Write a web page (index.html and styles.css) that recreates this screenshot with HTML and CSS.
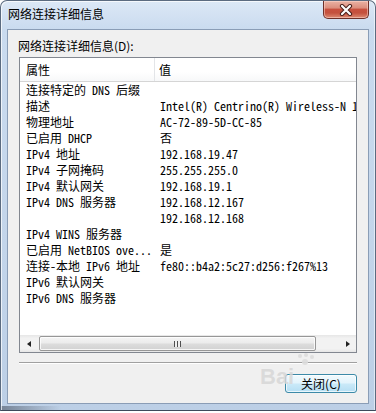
FILE: index.html
```html
<!DOCTYPE html>
<html lang="zh-CN">
<head>
  <meta charset="UTF-8">
  <title>网络连接详细信息</title>
  <link rel="stylesheet" href="styles.css">
</head>
<body>
  <div class="window">
    <div class="titlebar">
      <span class="title">网络连接详细信息</span>
      <button class="close-btn" aria-label="关闭">
        <svg width="14" height="12" viewBox="0 0 14 12">
          <path d="M3 2 L11 10 M11 2 L3 10" stroke="#4a1f1a" stroke-width="4.2" stroke-linecap="round"/>
          <path d="M3 2 L11 10 M11 2 L3 10" stroke="#ffffff" stroke-width="2.2" stroke-linecap="round"/>
        </svg>
      </button>
    </div>

    <div class="client">
      <div class="caption">网络连接详细信息(D):</div>

      <div class="listview">
        <div class="lv-header">
          <div class="lv-col name">属性</div>
          <div class="lv-col value">值</div>
        </div>
        <div class="lv-body">
          <div class="lv-row"><span class="name">连接特定的 DNS 后缀</span><span class="value"></span></div>
          <div class="lv-row"><span class="name">描述</span><span class="value">Intel(R) Centrino(R) Wireless-N 1000</span></div>
          <div class="lv-row"><span class="name">物理地址</span><span class="value">AC-72-89-5D-CC-85</span></div>
          <div class="lv-row"><span class="name">已启用 DHCP</span><span class="value">否</span></div>
          <div class="lv-row"><span class="name">IPv4 地址</span><span class="value">192.168.19.47</span></div>
          <div class="lv-row"><span class="name">IPv4 子网掩码</span><span class="value">255.255.255.0</span></div>
          <div class="lv-row"><span class="name">IPv4 默认网关</span><span class="value">192.168.19.1</span></div>
          <div class="lv-row"><span class="name">IPv4 DNS 服务器</span><span class="value">192.168.12.167</span></div>
          <div class="lv-row"><span class="name"></span><span class="value">192.168.12.168</span></div>
          <div class="lv-row"><span class="name">IPv4 WINS 服务器</span><span class="value"></span></div>
          <div class="lv-row"><span class="name">已启用 NetBIOS ove...</span><span class="value">是</span></div>
          <div class="lv-row"><span class="name">连接-本地 IPv6 地址</span><span class="value">fe80::b4a2:5c27:d256:f267%13</span></div>
          <div class="lv-row"><span class="name">IPv6 默认网关</span><span class="value"></span></div>
          <div class="lv-row"><span class="name">IPv6 DNS 服务器</span><span class="value"></span></div>
        </div>
        <div class="hscroll">
          <div class="sb-arrow left"></div>
          <div class="sb-track">
            <div class="sb-thumb"><span class="grip"></span></div>
          </div>
          <div class="sb-arrow right"></div>
        </div>
      </div>

      <div class="separator"></div>

      <div class="actions">
        <button class="btn">关闭(C)</button>
      </div>

      <!-- baidu watermark -->
      <div class="watermark">
        <span class="paw"></span>
        <span class="wm-text">Bai</span>
      </div>
    </div>
  </div>
</body>
</html>
```

FILE: styles.css
```css
/* Reset */
body, div, span, button {
  margin: 0;
  padding: 0;
}

body {
  width: 376px;
  height: 413px;
  overflow: hidden;
  background-color: #ffffff;
  font-family: "Noto Sans CJK SC", sans-serif;
  font-size: 12px;
  color: #000;
}

/* Window frame */
.window {
  width: 376px;
  height: 411px;
  box-sizing: border-box;
  border: 1px solid #5b6b80;
  border-bottom-color: #3e4a5a;
  border-radius: 7px 7px 0 0;
  background:
    linear-gradient(to right, rgba(60, 70, 85, 0.55) 0px, rgba(60, 70, 85, 0) 60px) bottom / 100% 4px no-repeat,
    linear-gradient(to bottom, #dce8f6 0%, #cadbef 28px, #c3d5ea 60%, #bccfe6 100%);
  padding: 0 6px 6px 6px;
  display: flex;
  flex-direction: column;
  box-shadow: inset 1px 1px 0 rgba(255, 255, 255, 0.7), inset -1px 0 0 rgba(255, 255, 255, 0.5);
}

.titlebar {
  height: 28px;
  display: flex;
  justify-content: space-between;
  align-items: flex-start;
}

.title {
  margin-top: 5px;
  margin-left: 1px;
  line-height: 16px;
  color: #000;
}

.close-btn {
  width: 46px;
  height: 18px;
  box-sizing: border-box;
  border: 1px solid #6e3029;
  border-top: none;
  border-radius: 0 0 5px 5px;
  background: linear-gradient(to bottom, #eab2a4 0%, #dc8f7e 40%, #c8503e 50%, #c4513d 70%, #dd8a72 100%);
  box-shadow: inset 0 0 0 1px rgba(255, 220, 210, 0.5);
  display: flex;
  align-items: center;
  justify-content: center;
  padding: 0;
}

/* Client area */
.client {
  position: relative;
  flex-grow: 1;
  background-color: #f0f0f0;
  border: 1px solid #8a9db6;
  padding: 8px 11px 0 11px;
  display: flex;
  flex-direction: column;
}

.caption {
  line-height: 16px;
  margin-left: -1px;
  margin-bottom: 3px;
}

/* List view */
.listview {
  height: 296px;
  box-sizing: border-box;
  border: 1px solid #828790;
  background-color: #fff;
  display: flex;
  flex-direction: column;
  overflow: hidden;
}

.lv-header {
  height: 23px;
  flex-shrink: 0;
  border-bottom: 1px solid #d5d5d5;
  display: flex;
  background: linear-gradient(to bottom, #ffffff 0%, #ffffff 60%, #f7f8f9 100%);
}

.lv-col {
  line-height: 23px;
  padding-left: 6px;
}

.lv-col.name {
  width: 135px;
  box-sizing: border-box;
  border-right: 1px solid #e3e5e8;
}

.lv-col.value {
  padding-left: 4px;
}

.lv-body {
  flex-grow: 1;
  overflow: hidden;
  font-family: "Noto Sans Mono CJK SC", "Noto Sans CJK SC", monospace;
}

.lv-row {
  height: 16px;
  line-height: 16px;
  display: flex;
  white-space: nowrap;
}

.lv-row .name {
  width: 135px;
  flex-shrink: 0;
  box-sizing: border-box;
  padding-left: 6px;
  overflow: hidden;
}

.lv-row .value {
  padding-left: 5px;
}

/* Horizontal scrollbar */
.hscroll {
  height: 17px;
  flex-shrink: 0;
  display: flex;
  background: linear-gradient(to bottom, #e6e6e6 0%, #f2f2f2 20%, #f2f2f2 80%, #e6e6e6 100%);
}

.sb-arrow {
  width: 17px;
  display: flex;
  align-items: center;
  justify-content: center;
}

.sb-arrow::before {
  content: "";
  width: 0;
  height: 0;
  border-top: 3.5px solid transparent;
  border-bottom: 3.5px solid transparent;
}

.sb-arrow.left::before {
  border-right: 4px solid #222;
}

.sb-arrow.right::before {
  border-left: 4px solid #222;
}

.sb-track {
  flex-grow: 1;
  padding: 1px 0 1px 2px;
  display: flex;
}

.sb-thumb {
  width: 277px;
  box-sizing: border-box;
  border: 1px solid #979797;
  border-radius: 2px;
  background: linear-gradient(to bottom, #f5f5f5 0%, #ececec 45%, #dcdcdc 55%, #d2d2d2 100%);
  box-shadow: inset 0 0 0 1px rgba(255, 255, 255, 0.8);
  display: flex;
  align-items: center;
  justify-content: center;
}

.grip {
  width: 7px;
  height: 6px;
  background: repeating-linear-gradient(to right, #505050 0, #505050 1px, #f0f0f0 1px, #f0f0f0 3px);
}

/* Separator and buttons */
.separator {
  margin-top: 9px;
  height: 1px;
  background-color: #a0a0a0;
  border-bottom: 1px solid #ffffff;
}

.actions {
  margin-top: 10px;
  display: flex;
  justify-content: flex-end;
}

.btn {
  width: 72px;
  height: 19px;
  box-sizing: border-box;
  border: 1px solid #3c8aa8;
  border-radius: 3px;
  background: linear-gradient(to bottom, #f2fafd 0%, #e3f4fc 45%, #c9e9f8 55%, #b5def3 100%);
  box-shadow: inset 0 0 0 1px rgba(255, 255, 255, 0.7);
  font-family: "Noto Sans CJK SC", sans-serif;
  font-size: 12px;
  line-height: 16px;
  color: #000;
}

/* Watermark */
.watermark {
  position: absolute;
  left: 252px;
  top: 322px;
  width: 60px;
  height: 40px;
  pointer-events: none;
}

.wm-text {
  position: absolute;
  left: 0;
  top: 12px;
  font-family: "Liberation Sans", sans-serif;
  font-weight: bold;
  font-size: 22px;
  color: rgba(215, 215, 215, 0.85);
}

.paw {
  position: absolute;
  left: 38px;
  top: 2px;
  width: 4px;
  height: 4px;
  border-radius: 50%;
  background-color: rgba(220, 220, 220, 0.9);
  box-shadow: 6px -1px 0 rgba(220, 220, 220, 0.9), 12px 1px 0 rgba(220, 220, 220, 0.9), 5px 6px 0 1px rgba(220, 220, 220, 0.9);
}
```
